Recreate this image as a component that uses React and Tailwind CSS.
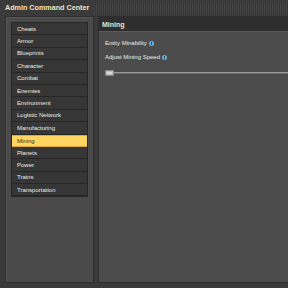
import React from 'react';

const items = [
  'Cheats',
  'Armor',
  'Blueprints',
  'Character',
  'Combat',
  'Enemies',
  'Environment',
  'Logistic Network',
  'Manufacturing',
  'Mining',
  'Planets',
  'Power',
  'Trains',
  'Transportation',
];

const InfoDot = () => (
  <span className="inline-flex w-[5px] h-[5px] rounded-full bg-[#5fb4e0] ml-[2px] items-center justify-center">
    <span className="w-[1px] h-[3px] bg-[#2a4a60]"></span>
  </span>
);

const App = () => {
  const selected = 'Mining';

  return (
    <div className="w-[288px] h-[288px] bg-[#3b3a3b] flex flex-col overflow-hidden font-['Liberation_Sans',sans-serif]">
      {/* Title bar */}
      <div className="h-[16px] flex items-center pl-[5px] shrink-0">
        <span className="text-[7.2px] font-bold text-[#f3e2bd] leading-none whitespace-nowrap">
          Admin Command Center
        </span>
        <div className="flex-1 h-[13px] ml-[5px] bg-[repeating-linear-gradient(90deg,#444344_0px,#444344_1px,#363536_1px,#363536_2px)]"></div>
      </div>

      {/* Body */}
      <div className="flex flex-1 pl-[5px] pb-[5px] gap-[4px]">
        {/* Left panel */}
        <div className="w-[89px] bg-[#4a4a4a] border border-[#2e2d2e] shadow-[inset_1px_1px_0_#565656] pt-[5px] px-[5px]">
          <div className="bg-[#2f2f2f] border border-[#262626] flex flex-col">
            {items.map((item) => (
              <div
                key={item}
                className={
                  item === selected
                    ? 'h-[12.4px] flex items-center pl-[5px] text-[6px] leading-none bg-[#fed561] text-[#3a2f10] border-y border-[#e0a93a]'
                    : 'h-[12.4px] flex items-center pl-[5px] text-[6px] leading-none bg-[#363636] text-[#ececec] border-b border-[#262626]'
                }
              >
                {item}
              </div>
            ))}
          </div>
        </div>

        {/* Right panel */}
        <div className="flex-1 bg-[#4b4b4b] border border-[#2e2d2e] border-r-0 flex flex-col">
          <div className="h-[15px] bg-[#2e2e2e] border-b border-[#5a5a5a] flex items-center pl-[3px] shrink-0">
            <span className="text-[7px] font-bold text-[#f3e2bd] leading-none">Mining</span>
          </div>
          <div className="flex flex-col pl-[6px] pt-[8px] gap-[8px]">
            <div className="flex items-center text-[6px] text-[#ececec] leading-none h-[6px]">
              Entity Minability
              <InfoDot />
            </div>
            <div className="flex items-center text-[6px] text-[#ececec] leading-none h-[6px]">
              Adjust Mining Speed
              <InfoDot />
            </div>
            <div className="flex items-center h-[6px] mt-[2px]">
              <div className="w-[9px] h-[6px] bg-[#d8d8d8] border border-[#8a8a8a] rounded-[1px] shadow-[inset_0_0_0_1px_#bdbdbd]"></div>
              <div className="flex-1 h-[2px] bg-[#9a9a9a] border-b border-[#6a6a6a]"></div>
            </div>
          </div>
        </div>
      </div>
    </div>
  );
};

export default App;
